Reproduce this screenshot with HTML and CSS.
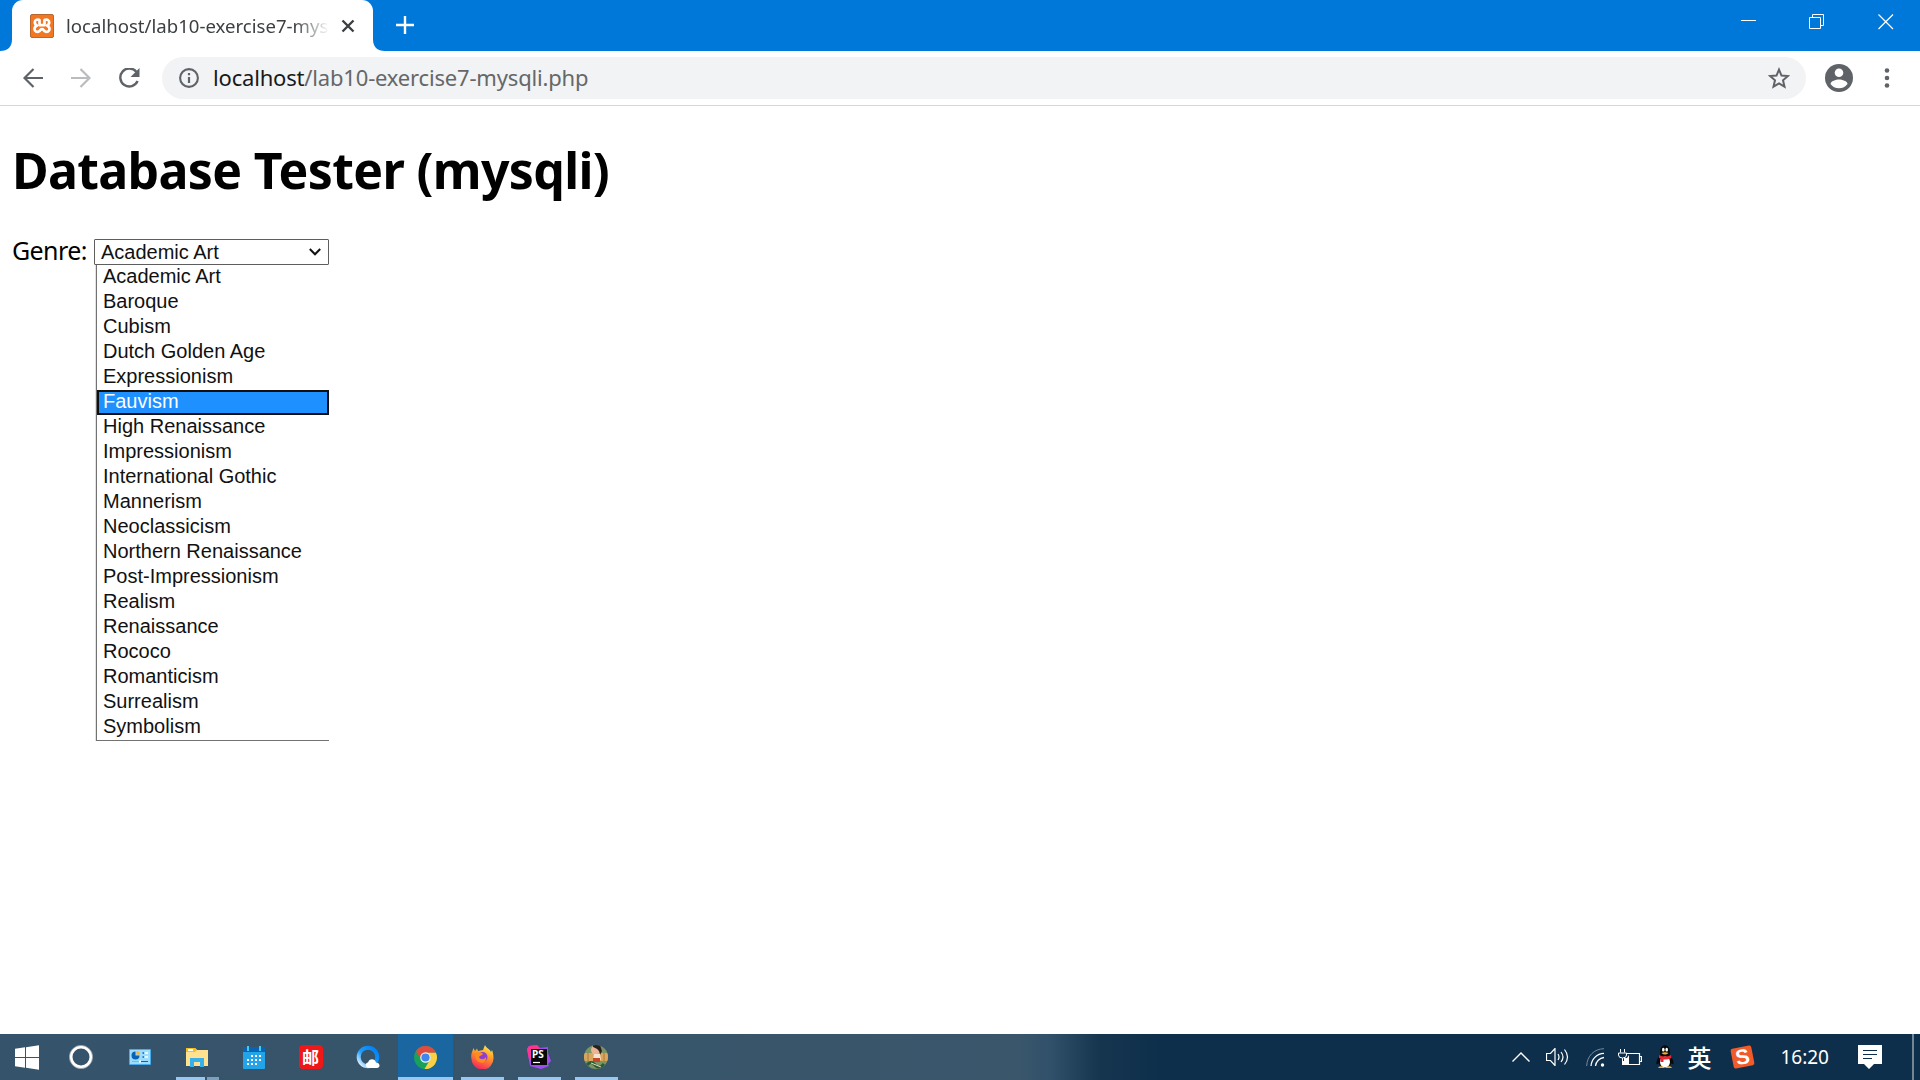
FILE: index.html
```html
<!DOCTYPE html>
<html lang="en">
<head>
<meta charset="utf-8">
<title>localhost/lab10-exercise7-mysqli.php</title>
<link rel="stylesheet" href="styles.css">
</head>
<body>
<div class="desktop">
  <header class="titlebar">
    <svg class="curve" width="12" height="51" viewBox="0 0 12 51"><path d="M12 39Q12 51 0 51H12Z" fill="#fff"/></svg>
    <div class="tab">
      <svg width="24" height="24" viewBox="0 0 24 24"><rect x=".5" y=".5" width="23" height="23" rx="1.500" fill="#f37623" stroke="#b8672f"/><path d="M9.500 6.200C7 4.800 4.800 6 4.800 8.300c0 1.800 1 2.700 2.200 3.200-1.500.7-2.500 1.800-2.500 3.400 0 2.600 2.500 3.700 4.500 2.500 1.500-.8 1.500-2.200 3-2.200s1.500 1.400 3 2.200c2 1.200 4.500.1 4.500-2.500 0-1.600-1-2.700-2.500-3.400 1.200-.5 2.200-1.400 2.200-3.200 0-2.300-2.200-3.500-4.700-2.100M9.500 6.200v3.600M14.500 6.200v3.600M9.500 11.200h5" fill="none" stroke="#fff" stroke-width="2.700" stroke-linejoin="round" stroke-linecap="round"/></svg>
      <span class="tab-title">localhost/lab10-exercise7-mysqli.php</span>
      <svg class="tab-close" width="14" height="14" viewBox="0 0 14 14"><path d="M1.500 1.500l11 11M12.500 1.500l-11 11" stroke="#3c4043" stroke-width="2.400"/></svg>
    </div>
    <svg width="12" height="51" viewBox="0 0 12 51"><path d="M0 39Q0 51 12 51H0Z" fill="#fff"/></svg>
    <svg class="new-tab" width="20" height="20" viewBox="0 0 20 20"><path d="M10 1v18M1 10h18" stroke="#fff" stroke-width="2.400"/></svg>
    <div class="window-buttons">
      <svg width="16" height="16" viewBox="0 0 16 16"><path d="M1 6.500h15" stroke="#fff"/></svg>
      <svg width="16" height="16" viewBox="0 0 16 16"><path d="M.5 3.500h11v11H.5zM3.500 3.500v-3h11v11h-3" fill="none" stroke="#fff"/></svg>
      <svg width="16" height="16" viewBox="0 0 16 16"><path d="M.5.500l14.500 14.500M15 .5L.5 15" stroke="#fff" stroke-width="1.200"/></svg>
    </div>
  </header>

  <nav class="toolbar">
    <svg class="back" width="20" height="20" viewBox="0 0 20 20"><path d="M20 10H2M10.500 1L1.500 10l9 9" fill="none" stroke="#5f6368" stroke-width="2.200"/></svg>
    <svg class="forward" width="20" height="20" viewBox="0 0 20 20"><path d="M0 10h18M9.500 1l9 9-9 9" fill="none" stroke="#babcbe" stroke-width="2.200"/></svg>
    <svg class="reload" width="21" height="20" viewBox="0 0 21 20"><path d="M17.500 4A9 9 0 1 0 18.600 13" fill="none" stroke="#5f6368" stroke-width="2.400"/><path d="M20.500 0v9h-9z" fill="#5f6368"/></svg>
    <div class="address">
      <svg width="20" height="20" viewBox="0 0 20 20"><circle cx="10" cy="10" r="8.900" fill="none" stroke="#5f6368" stroke-width="2.100"/><path d="M10 9v6M10 5v2.200" stroke="#5f6368" stroke-width="2.200"/></svg>
      <span class="url"><b>localhost</b>/lab10-exercise7-mysqli.php</span>
      <svg class="star" width="22" height="22" viewBox="0 0 22 22"><path d="M11 2.600l2.500 6 6.400.5-4.900 4.200 1.500 6.300L11 16.300l-5.500 3.300L7 13.300 2.100 9.100l6.400-.5z" fill="none" stroke="#5f6368" stroke-width="2"/></svg>
    </div>
    <svg class="profile" width="28" height="28" viewBox="0 0 28 28"><circle cx="14" cy="14" r="14" fill="#5f6368"/><circle cx="14" cy="8.700" r="4.300" fill="#fff"/><path d="M5.500 20c0-3 5.500-4.600 8.500-4.600s8.500 1.600 8.500 4.600c-1.800 2.700-5 4.300-8.500 4.300S7.300 22.700 5.500 20z" fill="#fff"/></svg>
    <svg width="6" height="20" viewBox="0 0 6 20" fill="#5f6368"><circle cx="3" cy="2.500" r="2.300"/><circle cx="3" cy="10" r="2.300"/><circle cx="3" cy="17.500" r="2.300"/></svg>
  </nav>

  <main class="page">
    <h1>Database Tester (mysqli)</h1>
    <div class="field">
      <span class="label">Genre:</span>
      <div class="select">
        <span>Academic Art</span>
        <svg width="12" height="8" viewBox="0 0 12 8"><path d="M.8 1L6 6.300 11.200 1" fill="none" stroke="#111" stroke-width="2"/></svg>
        <ul class="options">
          <li>Academic Art</li>
          <li>Baroque</li>
          <li>Cubism</li>
          <li>Dutch Golden Age</li>
          <li>Expressionism</li>
          <li class="active">Fauvism</li>
          <li>High Renaissance</li>
          <li>Impressionism</li>
          <li>International Gothic</li>
          <li>Mannerism</li>
          <li>Neoclassicism</li>
          <li>Northern Renaissance</li>
          <li>Post-Impressionism</li>
          <li>Realism</li>
          <li>Renaissance</li>
          <li>Rococo</li>
          <li>Romanticism</li>
          <li>Surrealism</li>
          <li>Symbolism</li>
        </ul>
      </div>
    </div>
  </main>

  <footer class="taskbar">
    <div class="apps">
      <div class="app start"><svg width="24" height="25" viewBox="0 0 24 25"><path d="M0 3.800L10 2.300V12H0zM11 2.200L24 .2V12H11zM0 13h10v9.700L0 21.300zM11 13h13v11.800l-13-2z" fill="#fff"/></svg></div>
      <div class="app cortana"><svg width="24" height="24" viewBox="0 0 24 24"><circle cx="12" cy="12" r="10" fill="none" stroke="#fff" stroke-width="3"/><circle cx="12" cy="12" r="11.600" fill="none" stroke="#9aa8b3" stroke-width=".8"/></svg></div>
      <div class="app"><svg width="22" height="16" viewBox="0 0 22 16"><rect width="22" height="16" rx="1" fill="#49abe9"/><rect x="1" y="1" width="20" height="14" fill="#9bdcff"/><path d="M6.500 2.500v4h4a4 4 0 1 1-4-4" fill="#0763b7"/><path d="M7.500 2v3.500H11A3.500 3.500 0 0 0 7.500 2" fill="#ffb128"/><path d="M13.500 4h1.500M13.500 8h1.500" stroke="#0763b7" stroke-width="1.500"/><path d="M16 4h3M16 8h3" stroke="#fff" stroke-width="1.500"/><path d="M3 12.500h7" stroke="#f4a12c"/><path d="M12 12.500h7" stroke="#0763b7"/><path d="M10 12.500h2" stroke="#fff" stroke-width="2"/></svg></div>
      <div class="app open explorer"><svg width="22" height="19" viewBox="0 0 22 19"><path d="M0 0h9l2 2h11v16H0z" fill="#ffe28f"/><path d="M0 0h9l2 2-2 2H0z" fill="#f5bd20"/><path d="M2 1h5v2H2z" fill="#fff"/><path d="M4 19v-9h14v9h-4v-5H8v5z" fill="#38b0eb"/></svg></div>
      <div class="app"><svg width="22" height="23" viewBox="0 0 22 23"><path d="M0 1h22v21q0 1-1 1H1q-1 0-1-1z" fill="#23a4e8"/><path d="M0 1h22v5H0z" fill="#0864b4"/><path d="M4 0h2v5H4zM16 0h2v5h-2z" fill="#4cc6f5"/><path d="M8 10h11M4 14h15M4 18h11" stroke="#fff" stroke-width="2" stroke-dasharray="2 2"/></svg></div>
      <div class="app"><div class="mail">邮</div></div>
      <div class="app"><svg width="24" height="24" viewBox="0 0 24 24"><defs><linearGradient id="browser-ring" x1="1" y1="0" x2="0" y2="1"><stop offset="0" stop-color="#007cf5"/><stop offset=".55" stop-color="#1b9dff"/><stop offset="1" stop-color="#fff"/></linearGradient></defs><circle cx="12" cy="12" r="9.300" fill="none" stroke="url(#browser-ring)" stroke-width="4"/><path d="M13 23c-4 0-4.500-5-1-5.500 1-4.500 7-4.500 8 0 5 .5 4 5.500 1 5.500z" fill="#fff"/></svg></div>
      <div class="app open current"><svg width="23" height="23" viewBox="0 0 24 24"><circle cx="12" cy="12" r="12" fill="#19a05b"/><path d="M2 5.400A12 12 0 0 1 22.900 7H12a5 5 0 0 0-4.800 6.500z" fill="#e04a3f"/><path d="M22.900 7A12 12 0 0 1 11 24l5.500-9.500A5 5 0 0 0 12 7z" fill="#fdcf44"/><circle cx="12" cy="12" r="5.500" fill="#f5f5f5"/><circle cx="12" cy="12" r="4.300" fill="#4186ee"/></svg></div>
      <div class="app open"><svg width="24" height="24" viewBox="0 0 24 24"><defs><linearGradient id="fox-body" x1=".8" y1="0" x2=".4" y2="1"><stop offset="0" stop-color="#fff04a"/><stop offset=".45" stop-color="#ff9727"/><stop offset="1" stop-color="#f5275c"/></linearGradient></defs><path d="M3.500 3l1.500 3 2-2.500L8 6l5-1 2-5c1 3 5 4 6 7l1-2c1 3 1.500 5 1.500 8a11 11 0 0 1-22 1C.5 10 2 7 3.500 3z" fill="url(#fox-body)"/><circle cx="12.500" cy="12" r="5" fill="#8e3fd0"/><path d="M5 8c3-1 7-1 8 1-1 2-3 1-4 3 1 3 5 3 7 0 1 5-4 7-7 5-3-1-4-5-4-9" fill="#ff8a1d"/></svg></div>
      <div class="app open"><svg width="24" height="25" viewBox="0 0 24 25"><path d="M0 4l2-3 8-1 2 3 9-1v6l3 8-3 3 1 2-8 3-11-3z" fill="#a24bf5"/><path d="M0 4l2-3 8-1 3 3-6 14-5-3z" fill="#ff3390"/><rect x="4" y="4" width="16" height="16" fill="#080808"/><text class="ps" x="5" y="13">PS</text><path d="M6 17.500h7" stroke="#fff" stroke-width="1.200"/></svg></div>
      <div class="app open"><svg width="24" height="24" viewBox="0 0 24 24"><defs><clipPath id="avatar-clip"><circle cx="12" cy="12" r="12"/></clipPath></defs><g clip-path="url(#avatar-clip)"><path d="M0 0h24v24H0z" fill="#7c9464"/><path d="M0 8h24v8H0z" fill="#d9a65f"/><path d="M4 8v8M20 8v8" stroke="#ac7838"/><circle cx="11.500" cy="5" r="4.500" fill="#e9b596"/><path d="M9 0h7l2 6-2 4c0-4-2-6-7-8" fill="#29211d"/><path d="M10 9h6l1 6H9z" fill="#f3e5d0"/><path d="M9 13h7v4H9z" fill="#c7472d"/><path d="M3 20q4-5 8 0t9-1" fill="none" stroke="#285c32" stroke-width="3"/><path d="M7 18l10 4" stroke="#e4d7ba"/></g></svg></div>
    </div>
    <div class="tray">
      <svg class="chevron" width="18" height="10" viewBox="0 0 18 10"><path d="M.5 9.500L9 1l8.500 8.500" fill="none" stroke="#fff" stroke-width="1.400"/></svg>
      <svg class="volume" width="23" height="18" viewBox="0 0 23 18"><path d="M.5 5.500h4l4.500-5v17l-4.500-5h-4z" fill="none" stroke="#fff" stroke-width="1.200"/><path d="M12 6q2 3 0 6M15 4q4 5 0 10M18.500 1.500q6 7.500 0 15" fill="none" stroke="#fff" stroke-width="1.200"/></svg>
      <svg class="wifi" width="19" height="19" viewBox="0 0 19 19" fill="none"><path d="M.7 18C1 8 8 1 18 .7" stroke="#75899b"/><path d="M5 18C5.500 11 11 5.500 18 5.300M9.500 18C10 13.500 13.500 10 18 9.500" stroke="#fff" stroke-width="1.300"/><circle cx="16.500" cy="17" r="1.700" fill="#fff"/></svg>
      <svg class="battery" width="24" height="17" viewBox="0 0 24 17" fill="none" stroke="#fff"><path d="M8 4.500h13.500v11H5.500V12M22 7.500h1.500v5H22" stroke-width="1.200"/><path d="M2.500 0v3.500M6.500 0v3.500M.5 4h8v2q0 3-4 3t-4-3zM4.500 9v7"/><path d="M6 9h3l2-3v9H6z" fill="#fff" stroke="none"/></svg>
      <svg class="qq" width="18" height="24" viewBox="0 0 18 24"><path d="M4 7c0-9 10-9 10 0v3c2 3 4 6 3.500 9-1 1-2-1-2-1-1 5-12 5-13 0 0 0-1 2-2 1C0 16 2 13 4 10z" fill="#080b0e"/><ellipse cx="9" cy="17" rx="5" ry="5.500" fill="#fff"/><ellipse cx="7.300" cy="4.700" rx="1.300" ry="1.900" fill="#fff"/><ellipse cx="10.700" cy="4.700" rx="1.300" ry="1.900" fill="#fff"/><path d="M5.500 8q3.500-1.500 7 0Q9 11 5.500 8M2 23q1-3 6-1v1zM16 23q-1-3-6-1v1z" fill="#ffae17"/><path d="M3 10q6 3 12 0l.5 3Q11 15 7.500 14.500V17h-3v-3.500L3 13z" fill="#ee2533"/></svg>
      <span class="ime">英</span>
      <div class="sogou">S</div>
      <span class="clock">16:20</span>
      <svg class="notice" width="24" height="24" viewBox="0 0 24 24"><path d="M0 0h24v19h-8l-5 5-5-5H0z" fill="#fff"/><path d="M5 5.500h14M5 9.500h14M5 13.500h9" stroke="#0e2f4b"/></svg>
      <div class="show-desktop"></div>
    </div>
  </footer>
</div>
</body>
</html>
```
FILE: styles.css
```css
* { box-sizing: border-box; }
body { margin: 0; background: #fff; font-family: "Noto Sans", "Noto Sans CJK SC", sans-serif; color: #000; }
svg { display: block; flex: none; }
.desktop { width: 1920px; height: 1080px; display: flex; flex-direction: column; overflow: hidden; }

.titlebar { height: 51px; background: #0078d9; display: flex; flex: none; }
.tab { width: 361px; height: 51px; background: #fff; border-radius: 11px 11px 0 0; display: flex; align-items: center; padding-left: 18px; }
.tab-title { width: 263px; margin-left: 12px; overflow: hidden; white-space: nowrap; font-size: 18.600px; line-height: 30px; color: #3c4043; padding-top: 1px; -webkit-mask-image: linear-gradient(to right, #000 228px, transparent 263px); mask-image: linear-gradient(to right, #000 228px, transparent 263px); }
.tab-close { margin-left: 12px; }
.new-tab { margin: 15px 0 0 10px; }
.window-buttons { margin: 14px 26px 0 auto; display: flex; gap: 53px; }

.toolbar { height: 55px; flex: none; display: flex; align-items: center; border-bottom: 1px solid #d5d7d9; padding: 0 30px 0 23px; }
.forward { margin-left: 28px; }
.reload { margin-left: 28px; }
.address { width: 1644px; height: 42px; margin-left: 22px; border-radius: 21px; background: #f1f3f4; display: flex; align-items: center; padding: 0 16px 0 17px; }
.url { margin-left: 14px; padding-bottom: 2px; font-size: 22px; letter-spacing: -0.18px; line-height: 30px; color: #656769; white-space: nowrap; }
.url b { font-weight: 400; color: #18191b; }
.star { margin-left: auto; }
.profile { margin: 0 31px 0 auto; }

.page { flex: 1; padding: 31px 12px; }
h1 { margin: 0; font-size: 50px; letter-spacing: -0.65px; line-height: 66px; font-weight: 700; white-space: nowrap; }
.field { display: flex; margin-top: 36px; height: 26px; align-items: center; }
.label { width: 82px; font-size: 25px; letter-spacing: -0.6px; line-height: 26px; padding-bottom: 5px; }
.select { position: relative; width: 235px; height: 26px; border: 1px solid #5e5e5e; border-radius: 1px; padding: 0 7px 0 6px; display: flex; align-items: center; justify-content: space-between; font: 20px/24px "Liberation Sans", Arial, sans-serif; color: #111; }
.options { position: absolute; left: 1px; top: 25px; width: 233px; margin: 0; padding: 0; list-style: none; background: #fff; border-left: 1px solid #727272; border-bottom: 1px solid #727272; box-shadow: -1px 0 0 #e2e2e2; }
.options li { height: 25px; line-height: 23px; padding-left: 6px; border: 0 solid #101010; }
.options .active { background: #1e90ff; color: #fff; border-width: 2px; padding-left: 4px; line-height: 18px; }

.taskbar { height: 46px; flex: none; display: flex; justify-content: space-between; background: linear-gradient(to right, #35536a 0, #39566b 1020px, #31506a 1050px, #15354f 1100px, #0e2f4b 1160px, #0e2f4b 100%); }
.apps { display: flex; }
.app { width: 57px; height: 46px; display: flex; align-items: center; justify-content: center; position: relative; }
.app.start { width: 54px; }
.app.cortana { padding-right: 3px; }
.app.open::after { content: ""; position: absolute; left: 8px; right: 6px; bottom: 0; height: 3px; background: #98c8ef; }
.app.explorer::after { background: linear-gradient(to right, #98c8ef 29px, #35536a 29px, #35536a 31px, #7ea0ba 31px); }
.app.current { width: 55px; margin-left: 2px; padding-right: 1px; background: #1966a0; }
.app.current::after { left: 0; right: 0; }
.mail { width: 24px; height: 24px; border-radius: 4px; background: #ef1718; color: #fff; font: 700 17px/23px "Noto Sans CJK SC", sans-serif; text-align: center; }
.ps { font: 700 10px "Noto Sans", sans-serif; fill: #fff; }
.tray { display: flex; align-items: center; color: #fff; }
.volume { margin-left: 16px; }
.wifi { margin-left: 17px; }
.battery { margin-left: 13px; }
.qq { margin-left: 14px; }
.ime { margin-left: 13px; font: 500 24px/30px "Noto Sans CJK SC", sans-serif; }
.sogou { width: 21px; height: 20px; margin-left: 21px; background: #f15b2b; transform: rotate(-11deg); border-radius: 2px; font: 700 21px/20px "Liberation Sans", sans-serif; text-align: center; }
.clock { margin-left: 27px; font-size: 19px; }
.notice { margin-left: 29px; }
.show-desktop { width: 8px; height: 46px; margin-left: 30px; border-left: 2px solid #728495; }
```
